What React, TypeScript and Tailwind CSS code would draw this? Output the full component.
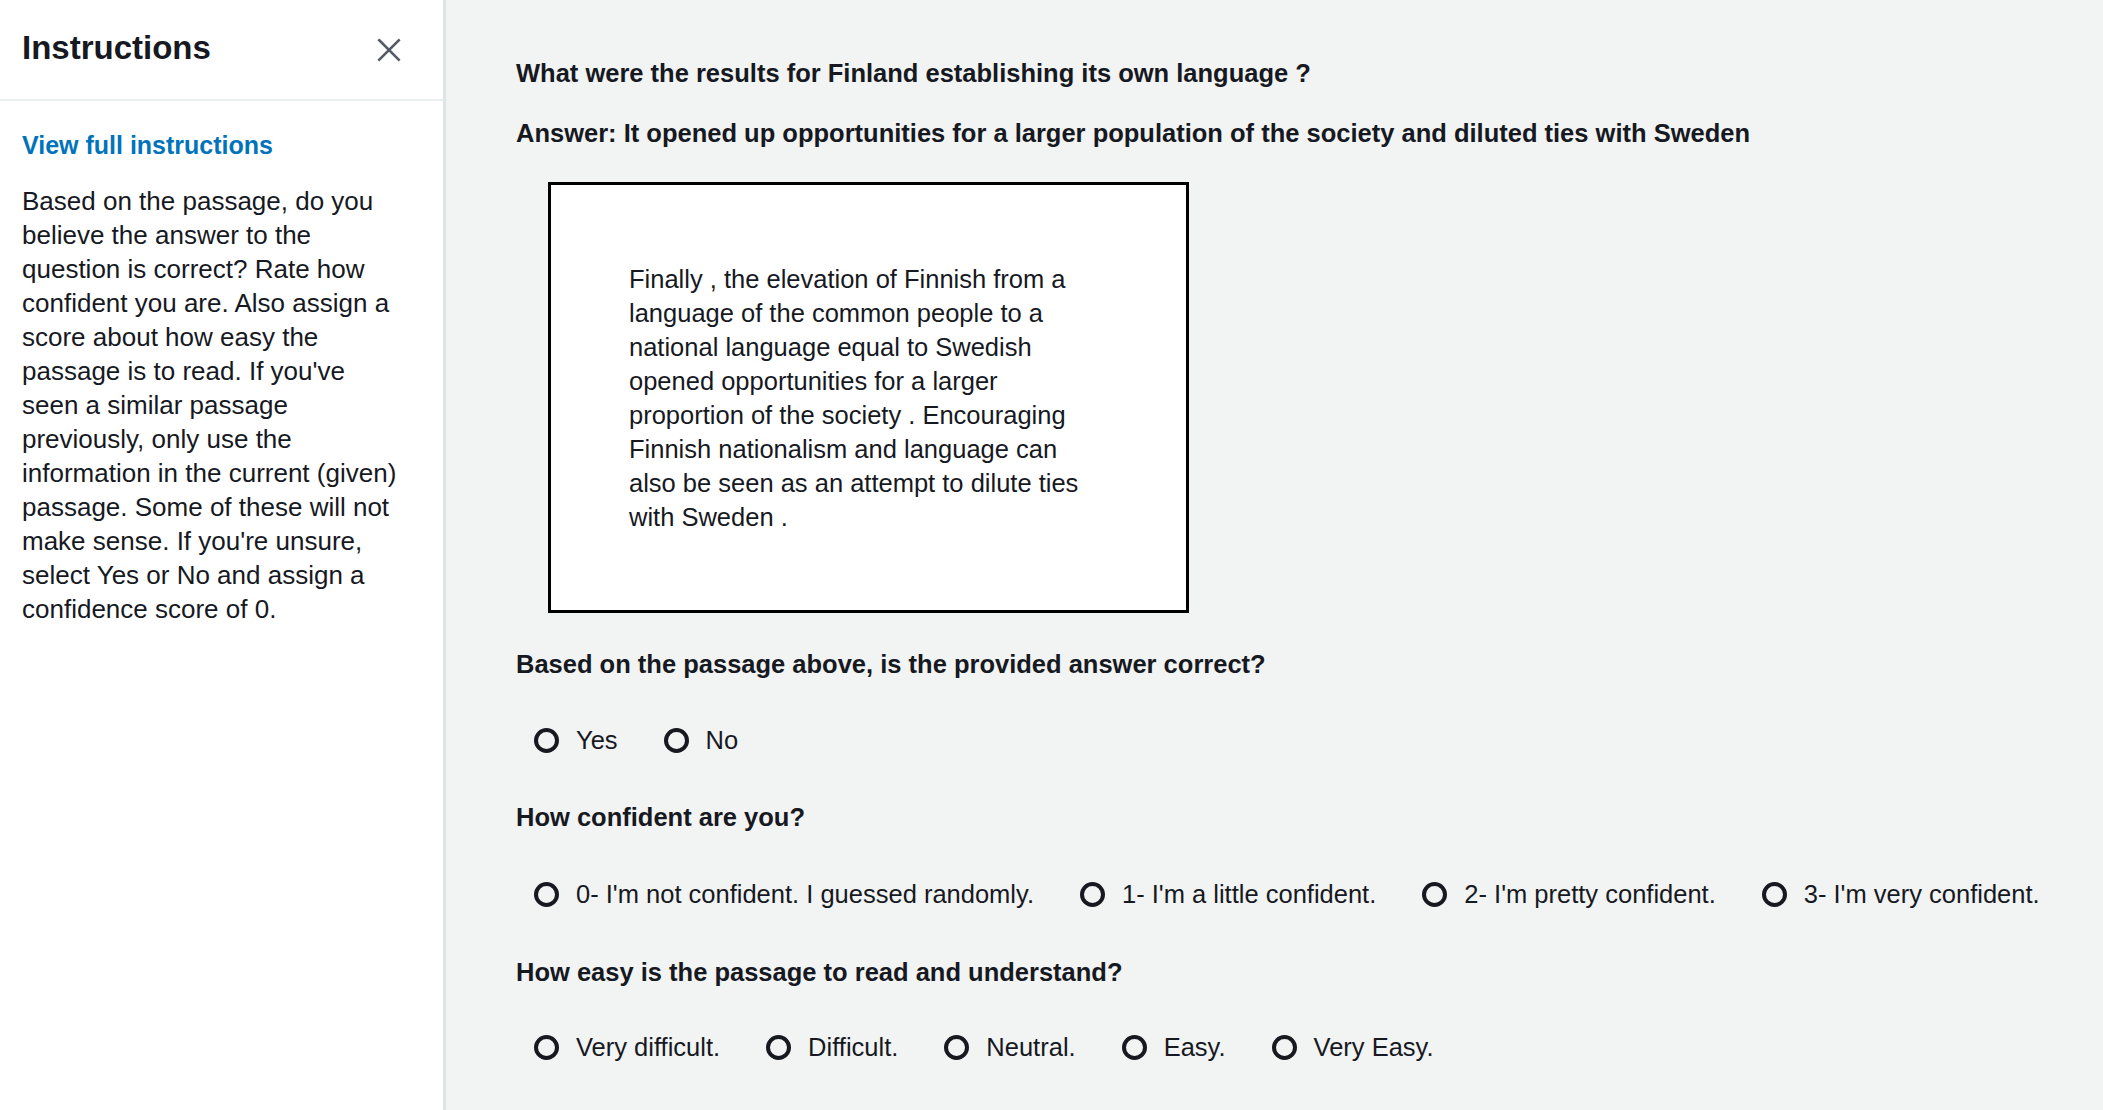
import { useState } from "react";

const FONT = { fontFamily: '"Liberation Sans", Arial, Helvetica, sans-serif' };

const CONFIDENCE = [
  "0- I'm not confident. I guessed randomly.",
  "1- I'm a little confident.",
  "2- I'm pretty confident.",
  "3- I'm very confident.",
];

const EASE = ["Very difficult.", "Difficult.", "Neutral.", "Easy.", "Very Easy."];

function RadioRow({
  name,
  options,
  value,
  onChange,
}: {
  name: string;
  options: string[];
  value: string | null;
  onChange: (v: string) => void;
}) {
  return (
    <div className="flex items-center gap-x-[46px] pl-[18px] h-[34px]">
      {options.map((opt) => (
        <label key={opt} className="flex items-center gap-[17px] cursor-pointer">
          <input
            type="radio"
            name={name}
            checked={value === opt}
            onChange={() => onChange(opt)}
            className="sr-only"
          />
          <span className="w-[25px] h-[25px] rounded-full border-[4px] border-[#16191f] flex items-center justify-center shrink-0">
            {value === opt && <span className="w-[9px] h-[9px] rounded-full bg-[#16191f]" />}
          </span>
          <span className="text-[25.5px] leading-[34px] text-[#16191f] whitespace-nowrap">{opt}</span>
        </label>
      ))}
    </div>
  );
}

function Heading({ children, className = "" }: { children: React.ReactNode; className?: string }) {
  return (
    <div className={`text-[25.5px] leading-[34px] font-bold text-[#16191f] ${className}`}>{children}</div>
  );
}

export default function App() {
  const [correct, setCorrect] = useState<string | null>(null);
  const [confidence, setConfidence] = useState<string | null>(null);
  const [ease, setEase] = useState<string | null>(null);

  return (
    <div className="flex w-[2103px] h-[1110px] overflow-hidden bg-[#f2f3f3]" style={FONT}>
      {/* instructions panel */}
      <aside className="w-[446px] shrink-0 h-full bg-white border-r-[3px] border-[#dfe3e3]">
        <div className="h-[101px] flex items-center justify-between pl-[22px] pr-[41px] border-b-2 border-[#eaeded]">
          <h1 className="text-[33px] font-bold text-[#16191f] leading-none -mt-[4px]">Instructions</h1>
          <button className="text-[#545b64]" aria-label="Close">
            <svg width="26" height="26" viewBox="0 0 24 24" fill="none" stroke="currentColor" strokeWidth="2.4" strokeLinecap="square">
              <path d="M3 3 21 21" />
              <path d="M21 3 3 21" />
            </svg>
          </button>
        </div>
        <div className="pl-[22px] pr-[45px]">
          <a href="#" className="block mt-[27px] text-[25px] leading-[34px] font-bold text-[#0073bb]">
            View full instructions
          </a>
          <p className="mt-[22px] text-[26px] leading-[34px] text-[#16191f]">
            Based on the passage, do you believe the answer to the question is correct? Rate how
            confident you are. Also assign a score about how easy the passage is to read. If you've
            seen a similar passage previously, only use the information in the current (given)
            passage. Some of these will not make sense. If you're unsure, select Yes or No and
            assign a confidence score of 0.
          </p>
        </div>
      </aside>

      {/* task */}
      <main className="flex-1 pl-[70px] pt-[56px]">
        <Heading>What were the results for Finland establishing its own language ?</Heading>
        <Heading className="mt-[26px]">
          Answer: It opened up opportunities for a larger population of the society and diluted ties
          with Sweden
        </Heading>

        <div className="mt-[32px] ml-[32px] w-[641px] bg-white border-[3px] border-black pl-[78px] pt-[77px] pb-[76px]">
          <p className="w-[470px] text-[25.5px] leading-[34px] text-[#16191f]">
            Finally , the elevation of Finnish from a language of the common people to a national
            language equal to Swedish opened opportunities for a larger proportion of the society .
            Encouraging Finnish nationalism and language can also be seen as an attempt to dilute
            ties with Sweden .
          </p>
        </div>

        <Heading className="mt-[34px]">Based on the passage above, is the provided answer correct?</Heading>
        <div className="mt-[42px]">
          <RadioRow name="correct" options={["Yes", "No"]} value={correct} onChange={setCorrect} />
        </div>

        <Heading className="mt-[43px]">How confident are you?</Heading>
        <div className="mt-[43px]">
          <RadioRow name="confidence" options={CONFIDENCE} value={confidence} onChange={setConfidence} />
        </div>

        <Heading className="mt-[44px]">How easy is the passage to read and understand?</Heading>
        <div className="mt-[41px]">
          <RadioRow name="ease" options={EASE} value={ease} onChange={setEase} />
        </div>
      </main>
    </div>
  );
}
